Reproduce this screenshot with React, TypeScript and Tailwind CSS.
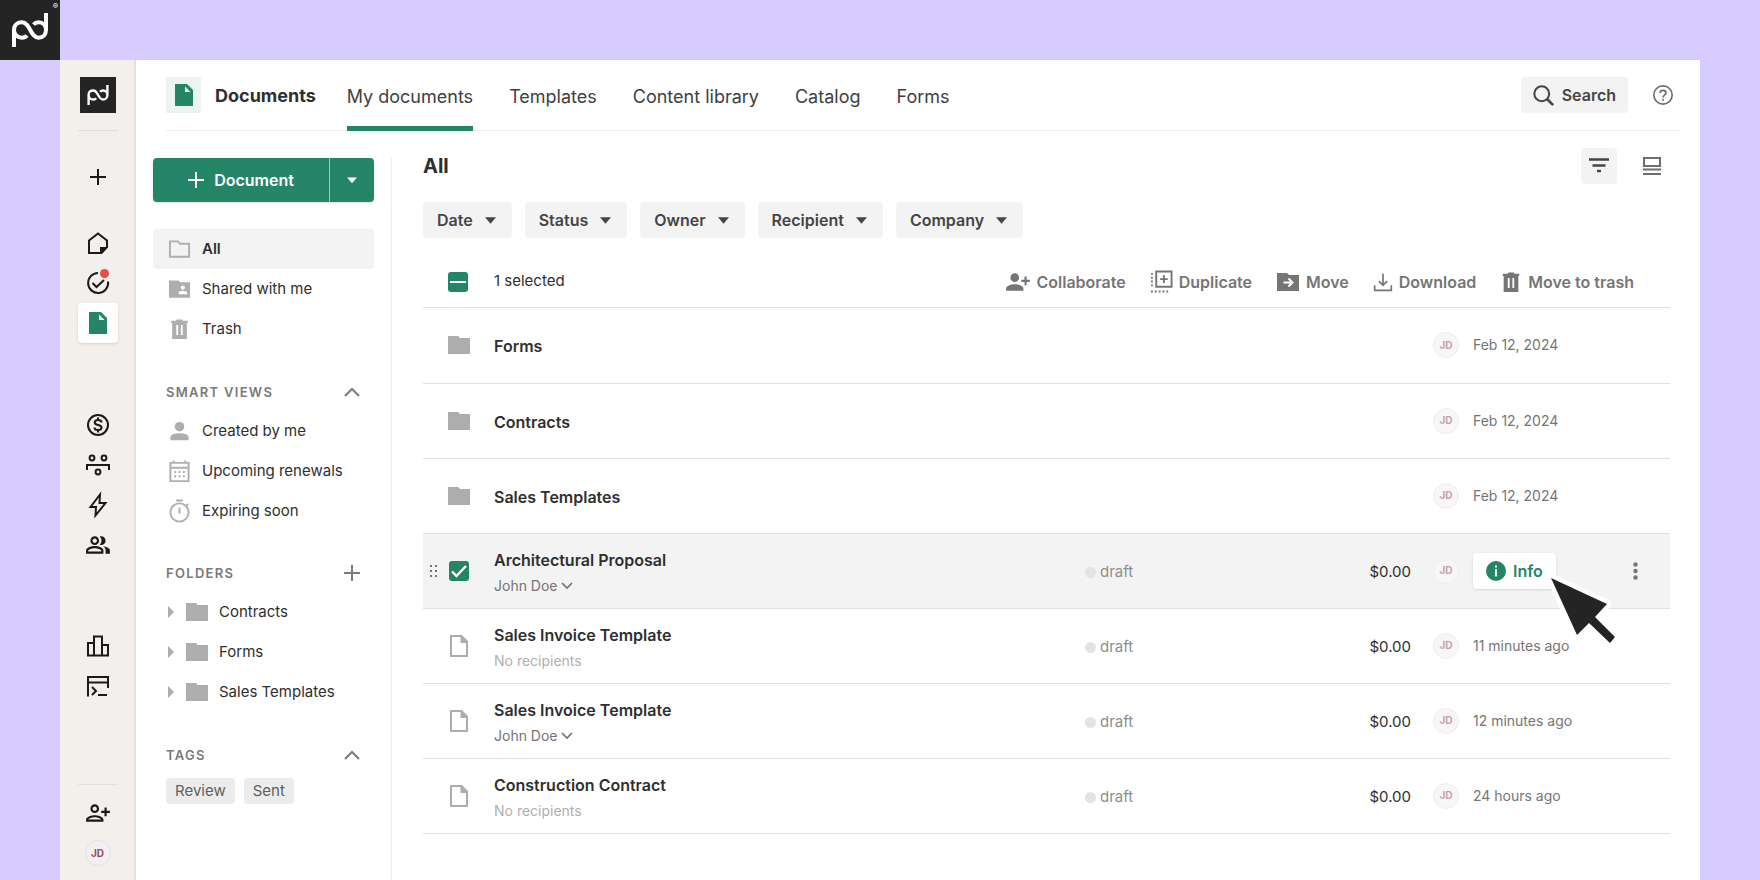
import { ReactNode } from "react";
import clsx from "clsx";
import { MdOutlinePeopleAlt, MdOutlinePersonAddAlt1, MdPersonAddAlt1 } from "react-icons/md";

type IconProps = { className?: string };

type Row = {
  name: string;
  kind: "folder" | "file";
  recipient?: string;
  date: string;
  selected?: boolean;
};

const rows: Row[] = [
  { name: "Forms", kind: "folder", date: "Feb 12, 2024" },
  { name: "Contracts", kind: "folder", date: "Feb 12, 2024" },
  { name: "Sales Templates", kind: "folder", date: "Feb 12, 2024" },
  { name: "Architectural Proposal", kind: "file", recipient: "John Doe", date: "", selected: true },
  { name: "Sales Invoice Template", kind: "file", date: "11 minutes ago" },
  { name: "Sales Invoice Template", kind: "file", recipient: "John Doe", date: "12 minutes ago" },
  { name: "Construction Contract", kind: "file", date: "24 hours ago" },
];

const tabs = ["My documents", "Templates", "Content library", "Catalog", "Forms"];
const filters = ["Date", "Status", "Owner", "Recipient", "Company"];
const folders = ["Contracts", "Forms", "Sales Templates"];
const tags = ["Review", "Sent"];

function Svg({ className, children, box = "0 0 24 24" }: IconProps & { children: ReactNode; box?: string }) {
  return (
    <svg
      viewBox={box}
      fill="none"
      stroke="currentColor"
      strokeWidth="2"
      className={clsx("shrink-0 overflow-visible", className)}
      aria-hidden="true"
    >
      {children}
    </svg>
  );
}

function PdMark({ className }: IconProps) {
  return (
    <Svg className={className} box="0 0 36 34">
      <path
        d="M2 34V17C2 12 5.500 9.300 10 9.300C18.500 9.300 18 24.700 26.500 24.700C31 24.700 34 21.500 34 17V0M34 17C34 12.500 31 9.300 26.500 9.300C24.500 9.300 22.800 10 21.500 11.500M2 17C2 21.500 5.500 24.700 10 24.700C12 24.700 13.800 24 15 22.500"
        strokeWidth="4"
      />
    </Svg>
  );
}

function DocSolid({ className }: IconProps) {
  return (
    <Svg className={className}>
      <path d="M3 1h12l6 6v16H3z" fill="currentColor" stroke="none" />
      <path d="M13 3.500V9h5.500z" fill="#fff" stroke="none" />
    </Svg>
  );
}

function FileIcon({ className }: IconProps) {
  return (
    <Svg className={className}>
      <path d="M4 2h10.500L20 7.500V22H4z" />
      <path d="M13.500 2v7H20V7l-5-5z" fill="currentColor" stroke="none" />
    </Svg>
  );
}

function FolderIcon({ className, children }: IconProps & { children?: ReactNode }) {
  return (
    <Svg className={className}>
      <path d="M1 3h10l2 2h10v16H1z" fill="currentColor" stroke="none" />
      {children}
    </Svg>
  );
}

function TrashIcon({ className }: IconProps) {
  return (
    <Svg className={className}>
      <path d="M3 3h5l1-1.500h6L16 3h5v2.500h-1V23H4V5.500H3z" fill="currentColor" stroke="none" />
      <path d="M9.500 7.500v11M14.500 7.500v11" stroke="#fff" />
    </Svg>
  );
}

function PlusIcon({ className }: IconProps) {
  return (
    <Svg className={className} box="0 0 16 16">
      <path d="M8 0v16M0 8h16" />
    </Svg>
  );
}

function Caret({ className }: IconProps) {
  return (
    <Svg className={className} box="0 0 12 8">
      <path d="M0 1h12L6 8z" fill="currentColor" stroke="none" />
    </Svg>
  );
}

function ChevronUp() {
  return (
    <Svg className="h-4 w-4" box="0 0 16 16">
      <path d="M1 11l7-7 7 7" />
    </Svg>
  );
}

function Avatar({ faded }: { faded?: boolean }) {
  return (
    <span
      className={clsx(
        "flex h-[26px] w-[26px] items-center justify-center rounded-full border text-[10px] font-bold",
        faded ? "border-[#f3ebee] bg-[#f9f6f8] text-[#c5a3a6]" : "border-[#e6e0e2] bg-[#f4eff2] text-[#93505a]"
      )}
    >
      JD
    </span>
  );
}

function RailButton({ label, active, children }: { label: string; active?: boolean; children: ReactNode }) {
  return (
    <button
      aria-label={label}
      className={clsx("flex h-10 w-10 shrink-0 items-center justify-center", active && "rounded-sm bg-white text-[#248567] shadow-sm")}
    >
      {children}
    </button>
  );
}

function Rail() {
  return (
    <nav className="flex w-[76px] shrink-0 flex-col items-center border-r-2 border-[#e4e0de] bg-[#f3efec] pt-[17px] pb-[7px] pl-px text-[#1a1a1a]">
      <a href="#home" aria-label="Home page" className="flex h-9 w-9 items-center justify-center bg-[#242424] text-white">
        <PdMark className="h-5 w-[22px]" />
      </a>
      <hr className="mt-[17px] w-10 border-[#e0dcda]" />
      <div className="mt-[26px]">
        <RailButton label="Create">
          <PlusIcon className="h-4 w-4" />
        </RailButton>
      </div>
      <div className="mt-[26px]">
        <RailButton label="Home">
          <Svg className="h-6 w-6">
            <path d="M3 9.500L12 2.500l9 7V16l-5.500 6H3z" />
            <path d="M14 23v-7h8z" fill="currentColor" stroke="none" />
          </Svg>
        </RailButton>
        <RailButton label="Tasks">
          <Svg className="h-6 w-6">
            <path d="M12 2A10 10 0 1 0 22 10.500M6.500 12l4 4L18 9" />
            <circle cx="18.500" cy="2.500" r="4.500" fill="#e44f4a" stroke="none" />
          </Svg>
        </RailButton>
        <RailButton label="Documents" active>
          <DocSolid className="h-6 w-6" />
        </RailButton>
      </div>
      <div className="mt-[62px]">
        <RailButton label="Payments">
          <Svg className="h-6 w-6">
            <circle cx="12" cy="12" r="10" />
            <path d="M15.500 9.500C15.500 7.800 14 7 12 7S8.700 8 8.700 9.500C8.700 13 15.500 11 15.500 14.500C15.500 16 14 17 12 17S8.500 16 8.500 14.500M12 4.500V7M12 17v2.500" />
          </Svg>
        </RailButton>
        <RailButton label="Rooms">
          <Svg className="h-6 w-6">
            <circle cx="6" cy="5" r="2.400" />
            <circle cx="18" cy="5" r="2.400" />
            <circle cx="12" cy="19" r="2.400" />
            <path d="M1 17v-5h22v5" />
          </Svg>
        </RailButton>
        <RailButton label="Automations">
          <Svg className="h-6 w-6">
            <path d="M14 1.500L4.500 14H10L9.500 22.500L19.500 10H13.500z" />
          </Svg>
        </RailButton>
        <RailButton label="Contacts">
          <MdOutlinePeopleAlt className="h-[26px] w-[26px]" />
        </RailButton>
      </div>
      <div className="mt-[61px]">
        <RailButton label="Reports">
          <Svg className="h-6 w-6">
            <path d="M2 21.500V9h6v12.500M8 21.500V2.500h8v19M16 11h6v10.500M1 21.500h22" />
          </Svg>
        </RailButton>
        <RailButton label="Developer">
          <Svg className="h-6 w-6">
            <path d="M2 22.500V3h20v11M2 8.500h20M6 13l4 4-4 4M12 21h9" />
          </Svg>
        </RailButton>
      </div>
      <hr className="mt-auto w-10 border-[#dfe0e0]" />
      <div className="mt-2">
        <RailButton label="Invite people">
          <MdOutlinePersonAddAlt1 className="h-[26px] w-[26px]" />
        </RailButton>
        <RailButton label="Account">
          <Avatar />
        </RailButton>
      </div>
    </nav>
  );
}

function Header() {
  return (
    <header className="mr-[19px] ml-[30px] flex h-[71px] items-center border-b border-[#eeeeee]">
      <span className="flex h-9 w-[35px] items-center justify-center bg-[#ebf4f1] text-[#248567]">
        <DocSolid className="h-6 w-6" />
      </span>
      <h1 className="ml-[14px] text-[18px] font-bold">Documents</h1>
      <nav className="ml-[31px] flex gap-9 self-stretch">
        {tabs.map((tab, i) => (
          <a
            key={tab}
            href="#tab"
            className={clsx(
              "-mb-px flex items-center border-b-[5px] pt-[6px] text-[18px] text-[#404040]",
              i === 0 ? "border-[#248567]" : "border-transparent"
            )}
          >
            {tab}
          </a>
        ))}
      </nav>
      <button className="ml-auto flex h-9 items-center gap-2 rounded bg-[#f3f3f3] px-3 text-base font-semibold text-[#454545]">
        <Svg className="h-[21px] w-[21px]">
          <circle cx="10" cy="10" r="8.500" strokeWidth="2.300" />
          <path d="M16 16l7 7" strokeWidth="3" />
        </Svg>
        Search
      </button>
      <button aria-label="Help" className="mr-2 ml-[25px] text-[#6e6e6e]">
        <Svg className="h-5 w-5">
          <circle cx="12" cy="12" r="11" />
          <path d="M8.500 9.500C8.500 7.500 10 6.500 12 6.500S15.500 7.700 15.500 9.500C15.500 11.700 12 12 12 15M12 16.500v2.500" />
        </Svg>
      </button>
    </header>
  );
}

function SideLink({ icon, label, active }: { icon: ReactNode; label: string; active?: boolean }) {
  return (
    <a href="#view" className={clsx("flex h-10 items-center gap-[11px] rounded-sm pl-[15px]", active && "bg-[#f3f3f3] font-semibold")}>
      <span className="text-[#aeaeae]">{icon}</span>
      {label}
    </a>
  );
}

function SideHeading({ title, className, children }: { title: string; className?: string; children: ReactNode }) {
  return (
    <div className={clsx("flex items-center justify-between pr-[14px] pl-[13px] text-[#7a7a7a]", className)}>
      <h2 className="text-[13px] font-semibold tracking-widest uppercase">{title}</h2>
      <button aria-label={title}>{children}</button>
    </div>
  );
}

function Sidebar() {
  return (
    <aside className="w-[221px] shrink-0 text-[15px]">
      <div className="flex h-11 rounded bg-[#248567] text-white shadow-sm">
        <button className="flex flex-1 items-center justify-center gap-[10px] text-base font-semibold">
          <PlusIcon className="h-4 w-4" />
          Document
        </button>
        <button aria-label="More document options" className="flex w-[45px] items-center justify-center border-l border-[#9fcabb]">
          <Caret className="h-2 w-[10px]" />
        </button>
      </div>
      <div className="mt-[27px]">
        <SideLink
          active
          label="All"
          icon={
            <Svg className="h-6 w-[23px]">
              <path d="M2 4h8.500l2 2.500H22V20H2z" />
            </Svg>
          }
        />
        <SideLink
          label="Shared with me"
          icon={
            <FolderIcon className="h-6 w-[23px]">
              <circle cx="15.500" cy="10.500" r="2.200" fill="#fff" stroke="none" />
              <path d="M11 17.500v-1.300C11 13 20 13 20 16.200v1.300z" fill="#fff" stroke="none" />
            </FolderIcon>
          }
        />
        <SideLink label="Trash" icon={<TrashIcon className="h-[22px] w-[23px]" />} />
      </div>
      <SideHeading title="Smart views" className="mt-[34px]">
        <ChevronUp />
      </SideHeading>
      <div className="mt-[9px]">
        <SideLink
          label="Created by me"
          icon={
            <Svg className="h-6 w-[23px]">
              <circle cx="12" cy="6.500" r="5" fill="currentColor" stroke="none" />
              <path d="M2.500 20.500v-3C2.500 12 21.500 12 21.500 17.500v3z" fill="currentColor" stroke="none" />
            </Svg>
          }
        />
        <SideLink
          label="Upcoming renewals"
          icon={
            <Svg className="h-6 w-[23px]">
              <path d="M2.500 2.500h19v19h-19zM2.500 7.500h19M6 0v3M18 0v3" />
              <path d="M6.500 12h11M6.500 16.500h11" strokeDasharray="2 2.500" />
            </Svg>
          }
        />
        <SideLink
          label="Expiring soon"
          icon={
            <Svg className="h-6 w-[23px]">
              <circle cx="12" cy="12.500" r="9.500" />
              <path d="M8.500 0h7M12 7.500v6M19 5.500l2-2" />
            </Svg>
          }
        />
      </div>
      <SideHeading title="Folders" className="mt-8">
        <PlusIcon className="h-4 w-4" />
      </SideHeading>
      <ul className="mt-[9px]">
        {folders.map((folder) => (
          <li key={folder}>
            <a href="#folder" className="flex h-10 items-center pl-[15px]">
              <Svg className="h-3 w-[6px] text-[#aeaeae]" box="0 0 6 12">
                <path d="M0 0l6 6-6 6z" fill="currentColor" stroke="none" />
              </Svg>
              <FolderIcon className="mr-[10px] ml-[11px] h-6 w-6 text-[#aeaeae]" />
              {folder}
            </a>
          </li>
        ))}
      </ul>
      <SideHeading title="Tags" className="mt-[34px]">
        <ChevronUp />
      </SideHeading>
      <div className="mt-3 flex gap-[9px] pl-[13px] text-[#5f5f5f]">
        {tags.map((tag) => (
          <button key={tag} className="h-[26px] rounded-sm bg-[#ececec] px-[9px] text-[15px] leading-none">
            {tag}
          </button>
        ))}
      </div>
    </aside>
  );
}

function Action({ label, icon }: { label: string; icon: ReactNode }) {
  return (
    <button className="flex items-center gap-[6px]">
      {icon}
      {label}
    </button>
  );
}

function Toolbar() {
  return (
    <div className="mt-[18px] flex h-[52px] items-center border-b border-[#e0e0e0] pr-9 pl-[25px]">
      <span className="relative flex h-5 w-5">
        <input id="select-all" type="checkbox" className="h-5 w-5 appearance-none rounded-[3px] bg-[#248567]" />
        <span className="pointer-events-none absolute inset-x-[2px] top-[9px] h-[2px] bg-white" />
      </span>
      <label htmlFor="select-all" className="ml-[26px] text-[15px]">
        1 selected
      </label>
      <div className="ml-auto flex gap-6 text-base font-semibold text-[#757575]">
        <Action label="Collaborate" icon={<MdPersonAddAlt1 className="h-[26px] w-[26px]" />} />
        <Action
          label="Duplicate"
          icon={
            <Svg className="h-[23px] w-[23px]">
              <path d="M6.500 1.500h16v16h-16zM14.500 5.500v8M10.500 9.500h8" />
              <path d="M2 3v16" strokeDasharray="2 2" />
              <path d="M1 22.500h19" strokeDasharray="2 2" />
            </Svg>
          }
        />
        <Action
          label="Move"
          icon={
            <FolderIcon className="h-6 w-6">
              <path d="M7.500 12.500H16M12.500 8.500l4 4-4 4" stroke="#fff" />
            </FolderIcon>
          }
        />
        <Action
          label="Download"
          icon={
            <Svg className="h-5 w-5">
              <path d="M2 16v6h20v-6M12 2v14M7 11l5 5 5-5" />
            </Svg>
          }
        />
        <Action label="Move to trash" icon={<TrashIcon className="h-[22px] w-[22px]" />} />
      </div>
    </div>
  );
}

function Pointer() {
  return (
    <svg viewBox="0 0 80 80" className="pointer-events-none absolute top-[17px] left-[70px] z-10 h-20 w-20" aria-hidden="true">
      <path d="M8 8L64 34L52 47L46 53L34 65z" fill="#fff" stroke="#fff" strokeWidth="9" strokeLinejoin="round" />
      <path d="M8 8L64 34L52 47L72 67L67 73L46 53L34 65z" fill="#242424" />
    </svg>
  );
}

function DocumentRow({ row }: { row: Row }) {
  const isFile = row.kind === "file";

  return (
    <tr className={clsx("h-[75px] border-b border-[#e0e0e0]", row.selected && "bg-[#f3f3f3]")}>
      <td>
        <div className="flex items-center pl-[7px]">
          <span className="w-2 text-[#757575]">
            {row.selected && (
              <svg viewBox="0 0 7 12" className="h-3 w-[7px]" fill="currentColor" aria-hidden="true">
                <path d="M0 0h2v2H0zM5 0h2v2H5zM0 5h2v2H0zM5 5h2v2H5zM0 10h2v2H0zM5 10h2v2H5z" />
              </svg>
            )}
          </span>
          <span className="flex w-[42px] items-center justify-center text-[#adadad]">
            {row.selected ? (
              <span className="relative flex">
                <input type="checkbox" defaultChecked aria-label={row.name} className="h-5 w-5 appearance-none rounded-[3px] bg-[#248567]" />
                <Svg className="pointer-events-none absolute inset-0 h-5 w-5 text-white" box="0 0 20 20">
                  <path d="M3 10.500l4.500 4.500L17 5" strokeWidth="2.400" />
                </Svg>
              </span>
            ) : isFile ? (
              <FileIcon className="h-6 w-6" />
            ) : (
              <FolderIcon className="h-6 w-6" />
            )}
          </span>
        </div>
      </td>
      <td>
        <div className={clsx("text-base font-semibold", isFile ? "mt-[6px]" : "mt-[2px]")}>{row.name}</div>
        {isFile &&
          (row.recipient ? (
            <button className="flex items-center gap-1 text-sm leading-7 text-[#757575]">
              {row.recipient}
              <Svg className="h-3 w-[10px]" box="0 0 10 12">
                <path d="M0 3l5 5 5-5" strokeWidth="1.700" />
              </Svg>
            </button>
          ) : (
            <div className="text-sm leading-7 text-[#b0b0b0]">No recipients</div>
          ))}
      </td>
      <td className="pt-1">
        {isFile && (
          <span className="flex items-center gap-1 text-[15px] text-[#8e8e8e]">
            <span className="h-[11px] w-[11px] rounded-full bg-[#e3e3e3]" />
            draft
          </span>
        )}
      </td>
      <td className="pt-1 pr-[22px] text-right text-[15px]">{isFile && "$0.00"}</td>
      <td>
        <Avatar faded />
      </td>
      <td className="text-sm text-[#757575]">
        {row.selected ? (
          <div className="relative">
            <button className="flex h-9 items-center gap-[7px] rounded bg-white px-[13px] text-base font-semibold text-[#248567] shadow-sm">
              <svg viewBox="0 0 20 20" className="h-5 w-5" aria-hidden="true">
                <circle cx="10" cy="10" r="10" fill="currentColor" />
                <path d="M9 4.500h2v2H9zM9 8h2v7.500H9z" fill="#fff" />
              </svg>
              Info
            </button>
            <Pointer />
          </div>
        ) : (
          row.date
        )}
      </td>
      <td>
        {row.selected && (
          <button aria-label="More actions" className="mx-auto flex">
            <svg viewBox="0 0 5 18" className="h-[18px] w-[5px]" fill="#757575" aria-hidden="true">
              <circle cx="2.500" cy="2.500" r="2.200" />
              <circle cx="2.500" cy="9" r="2.200" />
              <circle cx="2.500" cy="15.500" r="2.200" />
            </svg>
          </button>
        )}
      </td>
    </tr>
  );
}

function DocumentList() {
  return (
    <main className="min-w-0 flex-1 pr-[30px] pl-[31px]">
      <div className="-mt-[10px] flex h-9 items-center">
        <h2 className="text-xl font-bold">All</h2>
        <button aria-label="Filters" className="ml-auto flex h-9 w-9 items-center justify-center rounded bg-[#f3f3f3] text-[#454545]">
          <Svg className="h-5 w-5" box="0 0 20 20">
            <path d="M0 3.500h20M3.500 9.500h13M8 15h4" strokeWidth="2.400" />
          </Svg>
        </button>
        <button aria-label="Layout" className="mr-[9px] ml-[26px] text-[#6e6e6e]">
          <Svg className="h-[18px] w-[18px]" box="0 0 18 18">
            <path d="M1 1h16v8H1zM0 12.500h18M0 17h18" />
          </Svg>
        </button>
      </div>
      <div className="mt-[18px] flex gap-[13px]">
        {filters.map((filter) => (
          <button key={filter} className="flex h-9 items-center gap-3 rounded bg-[#f3f3f3] pr-4 pl-[14px] text-base font-semibold text-[#454545]">
            {filter}
            <Caret className="h-2 w-[11px]" />
          </button>
        ))}
      </div>
      <Toolbar />
      <table className="w-full table-fixed border-collapse text-left">
        <colgroup>
          <col className="w-[71px]" />
          <col />
          <col className="w-[248px]" />
          <col className="w-[100px]" />
          <col className="w-10" />
          <col className="w-[127px]" />
          <col className="w-[70px]" />
        </colgroup>
        <tbody>
          {rows.map((row, i) => (
            <DocumentRow key={i} row={row} />
          ))}
        </tbody>
      </table>
    </main>
  );
}

export default function App() {
  return (
    <div className="flex min-h-screen flex-col bg-[#d6ccff] font-[Inter,sans-serif] text-[#2f2f2f]">
      <a href="#brand" aria-label="Brand" className="relative flex h-[60px] w-[60px] items-center justify-center bg-[#242424] text-white">
        <PdMark className="h-[34px] w-9" />
        <span className="absolute top-0 right-[2px] text-[8px] leading-3">®</span>
      </a>
      <div className="mx-[60px] flex flex-1 bg-white">
        <Rail />
        <div className="flex min-w-0 flex-1 flex-col">
          <Header />
          <div className="mt-[27px] flex flex-1 pl-[17px]">
            <Sidebar />
            <div className="ml-[17px] w-px bg-[#ebebeb]" />
            <DocumentList />
          </div>
        </div>
      </div>
    </div>
  );
}
